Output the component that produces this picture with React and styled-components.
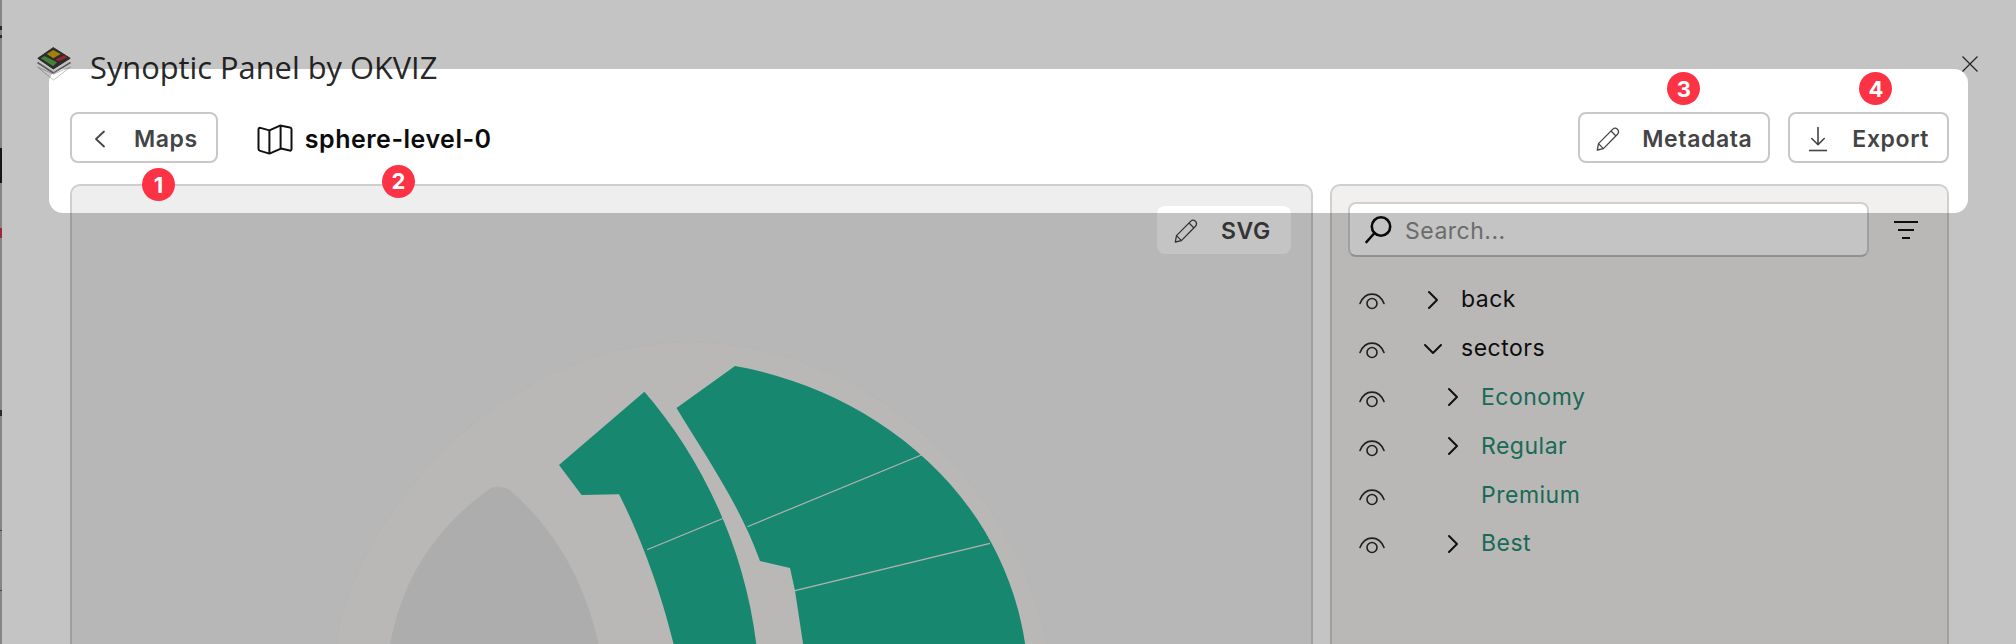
import React from "react";
import styled, { createGlobalStyle } from "styled-components";

const Global = createGlobalStyle`
  html, body { margin: 0; padding: 0; background: #fff; }
  * { box-sizing: border-box; }
`;

const Page = styled.div`
  display: flex;
  width: 2016px;
  height: 644px;
  overflow: hidden;
  font-family: Inter, "Liberation Sans", sans-serif;
  background: #fff;
`;

const EdgeStrip = styled.div`
  flex: 0 0 2px;
  background: linear-gradient(
    to bottom,
    #858585 0 26px, #2a2a2a 26px 30px, #858585 30px 35px, #2a2a2a 35px 38px,
    #858585 38px 148px, #161616 148px 183px, #858585 183px 228px,
    #9a2a3a 228px 238px, #858585 238px 410px, #2a2a2a 410px 416px,
    #858585 416px 530px, #444 530px 531px, #858585 531px 590px, #444 590px 591px, #858585 591px
  );
`;

const Dialog = styled.div`
  position: relative;
  flex: 1;
  height: 644px;
  overflow: hidden;
  padding: 47px 67px 0 68px;
  background: #fff;
`;

const TitleRow = styled.header`
  display: flex;
  align-items: flex-start;
  justify-content: space-between;
  height: 33px;
  margin: 0 -30px 32px -33px;
`;

const Brand = styled.div`
  display: flex;
  align-items: flex-start;
  gap: 19px;
`;

const BrandName = styled.h1`
  margin: -1px 0 0;
  font-family: "Open Sans", "Noto Sans", sans-serif;
  font-size: 30.8px;
  line-height: 42px;
  font-weight: 400;
  color: #2a2a2a;
`;

const CloseButton = styled.button`
  display: flex;
  padding: 0;
  margin-top: 8px;
  border: 0;
  background: none;
  color: #333;
`;

const Toolbar = styled.div`
  display: flex;
  align-items: center;
  height: 51px;
  margin-bottom: 21px;
`;

const ActionWrap = styled.div`
  position: relative;
  margin-left: ${(p) => p.$gap || 0}px;
`;

const ActionButton = styled.button`
  display: flex;
  align-items: center;
  gap: 22px;
  height: 51px;
  padding: 2px ${(p) => p.$right}px 0 16px;
  border: 2px solid #c8c8c8;
  border-radius: 8px;
  background: #fff;
  font-family: inherit;
  font-size: 23px;
  letter-spacing: 0.6px;
  font-weight: 600;
  color: #444;
`;

const MapName = styled.div`
  position: relative;
  display: flex;
  align-items: center;
  gap: 12px;
  margin-left: 39px;
  padding-top: 3px;
  font-size: 25px;
  letter-spacing: 0.5px;
  font-weight: 600;
  color: #0c0c0c;
`;

const Spacer = styled.div`
  flex: 1;
`;

const Badge = styled.span`
  position: absolute;
  z-index: 6;
  left: ${(p) => p.$left}px;
  top: ${(p) => p.$top}px;
  display: flex;
  align-items: center;
  justify-content: center;
  width: 33px;
  height: 33px;
  border-radius: 50%;
  background: #fc3345;
  color: #fff;
  font-size: 22px;
  letter-spacing: 0;
  font-weight: 700;
  line-height: 1;
`;

const Panels = styled.div`
  display: flex;
  gap: 17px;
`;

const Panel = styled.section`
  position: relative;
  flex: 0 0 ${(p) => p.$width}px;
  height: 480px;
  overflow: hidden;
  border: 2px solid #cfcfcf;
  border-radius: 10px;
  background: ${(p) => p.$bg};
`;

const ToolButton = styled.button`
  position: absolute;
  top: 20px;
  right: 20px;
  display: flex;
  align-items: center;
  gap: 23px;
  width: 134px;
  height: 48px;
  padding: 2px 0 0 17px;
  border: 0;
  border-radius: 8px;
  background: #fff;
  font-family: inherit;
  font-size: 23px;
  letter-spacing: 0.6px;
  font-weight: 600;
  color: #444;
`;

const SearchRow = styled.div`
  display: flex;
  align-items: center;
  gap: 25px;
  padding: 16px 0 0 16px;
`;

const SearchBox = styled.div`
  display: flex;
  align-items: center;
  gap: 12px;
  width: 521px;
  height: 55px;
  padding: 0 14px 0 13px;
  border: 2px solid #d0d0d0;
  border-bottom-color: #bcbcbc;
  border-radius: 8px;
  background: #fff;
  font-size: 23px;
  letter-spacing: 0.5px;
  color: #8c8c8c;
`;

const SearchText = styled.span`
  margin-top: 3px;
`;

const Tree = styled.ul`
  margin: 20px 0 0;
  padding: 0 0 0 27px;
  list-style: none;
`;

const TreeRow = styled.li`
  display: flex;
  align-items: center;
  height: 48.8px;
`;

const EyeSlot = styled.span`
  display: flex;
  flex: 0 0 ${(p) => 63 + p.$depth * 20}px;
`;

const ChevronSlot = styled.span`
  display: flex;
  align-items: center;
  justify-content: center;
  flex: 0 0 22px;
  height: 22px;
  margin: -3px 17px 0 0;
`;

const TreeLabel = styled.span`
  margin-top: -4px;
  font-size: 23px;
  letter-spacing: 0.5px;
  color: ${(p) => (p.$depth ? "#218a70" : "#121212")};
`;

const Spotlight = styled.div`
  position: absolute;
  z-index: 5;
  left: 47px;
  top: 69px;
  width: 1919px;
  height: 144px;
  border-radius: 14px;
  box-shadow: 0 0 0 3000px rgba(0, 0, 0, 0.232);
  pointer-events: none;
`;

const Logo = () => (
  <svg width="34" height="34" viewBox="0 0 34 34">
    <path d="M.5 20 16.5 33 33.5 20 16.5 27Z" fill="#fff" stroke="#c0c0c0" strokeWidth="1" />
    <path d="M.5 15.5 16.5 26 33.5 15.5" fill="none" stroke="#777" strokeWidth="1.6" />
    <path d="M16.3.6.8 11.3 16.3 22 33.2 11.3Z" fill="#3a3a3a" stroke="#3a3a3a" strokeWidth="1" strokeLinejoin="round" />
    <path d="M9.7 7 16.3 3 23.7 7 16.3 11.3Z" fill="#cfa80f" />
    <path d="M3.7 11.3 7.6 9 20 15.3 16.3 19.3Z" fill="#58a848" />
    <path d="M21.3 14.3 30.5 10.6 27 8.6 18.5 12.4Z" fill="#cc3030" />
  </svg>
);

const CloseIcon = () => (
  <svg width="18" height="18" viewBox="0 0 18 18" fill="none" stroke="currentColor" strokeWidth="1.3">
    <path d="M1.5 1.5 16.5 16.5M16.5 1.5 1.5 16.5" />
  </svg>
);

const BackIcon = () => (
  <svg width="24" height="24" viewBox="0 0 24 24" fill="none" stroke="currentColor" strokeWidth="1.8" strokeLinecap="round" strokeLinejoin="round">
    <path d="M16 4.5 8 12l8 7.5" />
  </svg>
);

const PencilIcon = () => (
  <svg width="24" height="24" viewBox="0 0 24 24" fill="none" stroke="currentColor" strokeWidth="1.3" strokeLinejoin="round">
    <path d="M1.3 23 2.5 16.6 16.6 2.4C18 1 20 .9 21.4 2.2 22.9 3.6 22.9 5.8 21.5 7.2L7.4 21.6Z" />
    <path d="M15 4 20 9" />
    <path d="M2.5 16.6 7.4 21.6" />
  </svg>
);

const ExportIcon = () => (
  <svg width="24" height="26" viewBox="0 0 24 26" fill="none" stroke="currentColor" strokeWidth="1.6" strokeLinecap="round" strokeLinejoin="round">
    <path d="M12 1.5v17M5.8 12.5l6.2 6.2 6.2-6.2" />
    <path d="M3 24.5h18" strokeLinecap="butt" />
  </svg>
);

const MapIcon = () => (
  <svg width="36" height="31" viewBox="0 0 36 31" fill="none" stroke="#111" strokeWidth="2" strokeLinejoin="round">
    <path d="M1.5 5.5C1.5 4.2 2.4 3.7 3.4 3.9L12.4 6.4 23 1.6 33 3.4C34 3.6 34.5 4.2 34.5 5.2V25C34.5 26 33.8 26.8 32.8 26.6L24 24.6 12.4 29.6 3.2 26.9C2.2 26.6 1.5 26 1.5 25Z" />
    <path d="M12.4 6.4V29.6M23.6 1.6V24.6" />
  </svg>
);

const SearchIcon = () => (
  <svg width="30" height="30" viewBox="0 0 30 30" fill="none" stroke="#0c0c0c" strokeWidth="2.6" strokeLinecap="round">
    <circle cx="18" cy="11.5" r="9.2" />
    <path d="M11.5 18 3.5 27" />
  </svg>
);

const FilterIcon = () => (
  <svg width="24" height="18" viewBox="0 0 24 18" fill="none" stroke="#111" strokeWidth="2">
    <path d="M0 1h24M4 9h16M8 17h8" />
  </svg>
);

const EyeIcon = () => (
  <svg width="26" height="18" viewBox="0 0 26 18" fill="none" stroke="#2a2a2a" strokeWidth="1.6" strokeLinecap="round">
    <path d="M1 11.5C6 -1 20 -1 25 11.5" />
    <circle cx="13" cy="11.5" r="5" />
  </svg>
);

const ChevronIcon = ({ open }) => (
  <svg width="22" height="22" viewBox="0 0 22 22" fill="none" stroke="#161616" strokeWidth="2" strokeLinecap="round" strokeLinejoin="round">
    <path d={open ? "M3 7l8 8 8-8" : "M7 3l8 8-8 8"} />
  </svg>
);

const SeatMap = () => (
  <svg width="1239" height="458" viewBox="72 186 1239 458" style={{ display: "block" }}>
    <path d="M336 660V644C352 520 500 342 688 342 880 342 1020 500 1047 644V660Z" fill="#f2f0ee" stroke="#ececea" />
    <path d="M389 650C402 570 445 520 491 488Q500 484 510 490C555 530 585 580 600 650Z" fill="#e2e2e2" />
    <path d="M644.4 391.7 559 465 581.6 495 619 494.3C635 525 660 585 675 650H757C745 540 695 450 644.4 391.7Z" fill="#1fb191" />
    <path d="M735 366 676.5 408C705 455 740 505 760 561L790 568 795 590.7 804 650H1026C1005 490 870 390 735 366Z" fill="#1fb191" />
    <path d="M647 549.7 723.5 518.3M747.4 526.7 921.4 455M795 590.7 990 543.3" stroke="#e8e8e8" strokeWidth="1.2" />
  </svg>
);

const items = [
  { name: "back", depth: 0, chevron: "right" },
  { name: "sectors", depth: 0, chevron: "down" },
  { name: "Economy", depth: 1, chevron: "right" },
  { name: "Regular", depth: 1, chevron: "right" },
  { name: "Premium", depth: 1 },
  { name: "Best", depth: 1, chevron: "right" },
];

export default function App() {
  return (
    <Page>
      <Global />
      <EdgeStrip />
      <Dialog>
        <TitleRow>
          <Brand>
            <Logo />
            <BrandName>Synoptic Panel by OKVIZ</BrandName>
          </Brand>
          <CloseButton aria-label="Close"><CloseIcon /></CloseButton>
        </TitleRow>
        <Toolbar>
          <ActionWrap>
            <ActionButton $right={18}><BackIcon />Maps</ActionButton>
            <Badge $left={72} $top={56}>1</Badge>
          </ActionWrap>
          <MapName>
            <MapIcon />
            sphere-level-0
            <Badge $left={125} $top={44}>2</Badge>
          </MapName>
          <Spacer />
          <ActionWrap>
            <ActionButton $right={16}><PencilIcon />Metadata</ActionButton>
            <Badge $left={89} $top={-40}>3</Badge>
          </ActionWrap>
          <ActionWrap $gap={18}>
            <ActionButton $right={18}><ExportIcon />Export</ActionButton>
            <Badge $left={71} $top={-40}>4</Badge>
          </ActionWrap>
        </Toolbar>
        <Panels>
          <Panel $width={1243} $bg="#eeeeee">
            <SeatMap />
            <ToolButton><PencilIcon />SVG</ToolButton>
          </Panel>
          <Panel $width={619} $bg="#f1f0ee">
            <SearchRow>
              <SearchBox><SearchIcon /><SearchText>Search...</SearchText></SearchBox>
              <FilterIcon />
            </SearchRow>
            <Tree>
              {items.map((item) => (
                <TreeRow key={item.name}>
                  <EyeSlot $depth={item.depth}><EyeIcon /></EyeSlot>
                  <ChevronSlot>
                    {item.chevron && <ChevronIcon open={item.chevron === "down"} />}
                  </ChevronSlot>
                  <TreeLabel $depth={item.depth}>{item.name}</TreeLabel>
                </TreeRow>
              ))}
            </Tree>
          </Panel>
        </Panels>
        <Spotlight />
      </Dialog>
    </Page>
  );
}
